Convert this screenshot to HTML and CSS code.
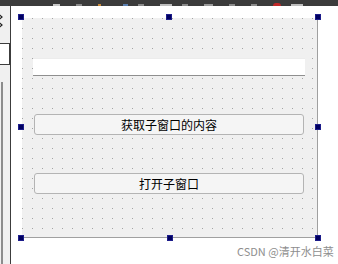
FILE: index.html
```html
<!DOCTYPE html>
<html lang="zh">
<head>
<meta charset="utf-8">
<link rel="stylesheet" href="styles.css">
</head>
<body>
<div class="screen">
  <div class="topbar">
    <span class="ic ic-a"></span>
    <span class="ic ic-b"></span>
    <span class="ic ic-o"></span>
    <span class="ic ic-c"></span>
    <span class="ic ic-b"></span>
    <span class="ic ic-w"></span>
    <span class="ic ic-b"></span>
    <span class="ic ic-d"></span>
    <span class="ic ic-b"></span>
    <span class="ic ic-b"></span>
    <span class="ic ic-r"></span>
    <span class="ic ic-w"></span>
  </div>
  <div class="main">
    <div class="side">
      <svg class="arrow" width="6" height="6" viewBox="0 0 6 6"><path d="M0 0.5 L3 3 L0 5.5" fill="none" stroke="#222" stroke-width="1.2"/></svg>
      <svg class="arrow" width="6" height="6" viewBox="0 0 6 6"><path d="M0 0.5 L3 3 L0 5.5" fill="none" stroke="#222" stroke-width="1.2"/></svg>
      <div class="sidebox"></div>
      <div class="sidebar-track"></div>
    </div>
    <div class="canvas">
      <div class="form">
        <div class="lineedit"></div>
        <div class="btn">获取子窗口的内容</div>
        <div class="btn">打开子窗口</div>
        <span class="handle h-tl"></span>
        <span class="handle h-tc"></span>
        <span class="handle h-tr"></span>
        <span class="handle h-ml"></span>
        <span class="handle h-mr"></span>
        <span class="handle h-bl"></span>
        <span class="handle h-bc"></span>
        <span class="handle h-br"></span>
      </div>
      <div class="watermark">CSDN @清开水白菜</div>
    </div>
  </div>
</div>
</body>
</html>
```

FILE: styles.css
```css
html, body {
  margin: 0;
  padding: 0;
  background: #ffffff;
}
.screen {
  width: 338px;
  height: 264px;
  display: flex;
  flex-direction: column;
  overflow: hidden;
  font-family: "Noto Sans CJK SC", "Noto Sans", sans-serif;
}
.topbar {
  height: 6px;
  background: #3b3b3b;
  display: flex;
  align-items: flex-end;
  padding-left: 53px;
  flex: none;
}
.ic {
  height: 2px;
  width: 7px;
  margin-right: 16px;
  background: #9a9a9a;
}
.ic-a { background: #c8c8c8; width: 7px; }
.ic-b { background: #8a8a8a; width: 6px; }
.ic-o { background: #c98a3a; width: 3px; margin-right: 22px; }
.ic-c { background: #5a7fb0; width: 5px; margin-right: 10px; }
.ic-w { background: #bdbdbd; width: 12px; margin-right: 10px; }
.ic-d { background: #9a9a9a; width: 9px; }
.ic-r { background: #c02828; width: 8px; height: 3px; border-radius: 4px 4px 0 0; margin-right: 10px; }
.main {
  flex: 1;
  display: flex;
}
.side {
  width: 10px;
  flex: none;
  background: #f0f0f0;
  border-right: 1px solid #3c3c3c;
  display: flex;
  flex-direction: column;
  overflow: hidden;
}
.arrow {
  display: block;
  margin-left: -1px;
  flex: none;
}
.arrow:first-of-type { margin-top: 8px; }
.arrow + .arrow { margin-top: 2px; }
.sidebox {
  margin-top: 15px;
  height: 20px;
  background: #ffffff;
  border-top: 1px solid #3c3c3c;
  border-bottom: 1px solid #3c3c3c;
  border-right: 1px solid #3c3c3c;
  flex: none;
}
.sidebar-track {
  margin-top: 17px;
  margin-left: 1px;
  width: 2px;
  flex: 1;
  background: #8c8c8c;
}
.canvas {
  flex: 1;
  position: relative;
  padding: 12px 0 0 11px;
}
.form {
  position: relative;
  width: 272px;
  height: 179px;
  background-color: #f0f0f0;
  background-image: radial-gradient(circle at 0.5px 0.5px, #a4a4a4 0.6px, transparent 0.8px);
  background-size: 10px 10px;
  border-right: 1px solid #a0a0a0;
  border-bottom: 1px solid #a0a0a0;
  padding: 40px 12px 0 11px;
  display: flex;
  flex-direction: column;
}
.lineedit {
  background: #ffffff;
  border-bottom: 1px solid #8f8f8f;
  border-top: 1px solid #ececec;
  box-sizing: border-box;
  height: 18px;
}
.btn {
  margin: 38px 1px 0 1px;
  height: 21px;
  box-sizing: border-box;
  border: 1px solid #b4b4b4;
  border-radius: 3px;
  background: #f5f5f5;
  font-size: 12px;
  line-height: 19px;
  text-align: center;
  color: #000;
}
.handle {
  position: absolute;
  width: 6px;
  height: 6px;
  box-sizing: border-box;
  background: #000060;
  border: 1px solid #1c1c8a;
}
.h-tl { left: -4px; top: -4px; }
.h-tc { left: 144px; top: -4px; }
.h-tr { left: 293px; top: -4px; }
.h-ml { left: -4px; top: 106px; }
.h-mr { left: 293px; top: 106px; }
.h-bl { left: -4px; top: 217px; }
.h-bc { left: 145px; top: 217px; }
.h-br { left: 293px; top: 217px; }
.watermark {
  position: absolute;
  left: 226px;
  top: 237px;
  font-size: 11px;
  color: #8e8e8e;
  white-space: nowrap;
  text-shadow: 0 0 1px #ffffff;
}
```
